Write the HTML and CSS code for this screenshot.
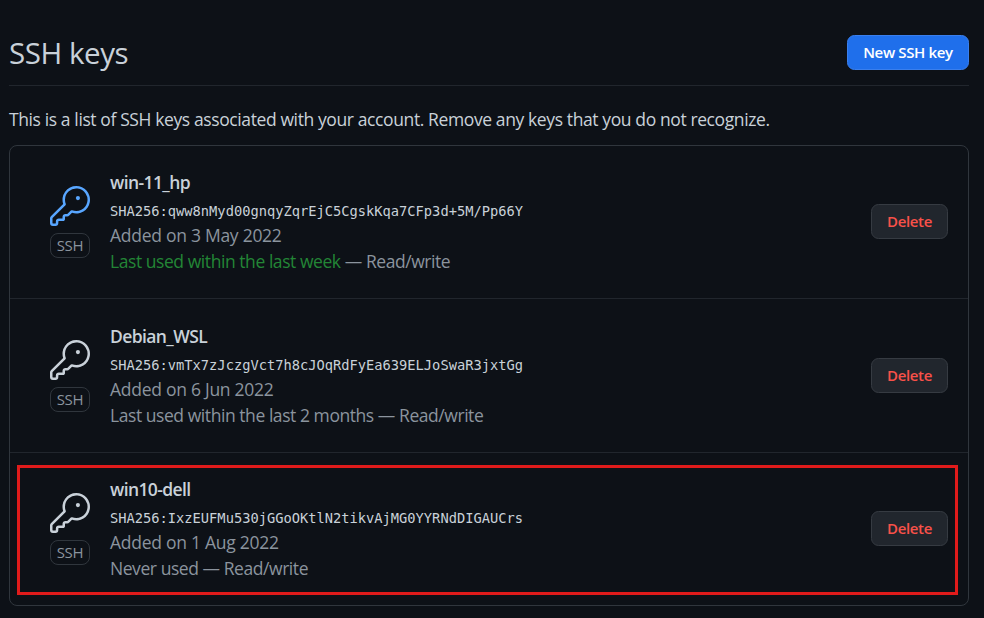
FILE: index.html
```html
<!DOCTYPE html>
<html lang="en">
<head>
<meta charset="utf-8">
<title>SSH keys</title>
<link rel="stylesheet" href="styles.css">
</head>
<body>
<svg width="0" height="0" class="sprite" aria-hidden="true">
  <symbol id="key" viewBox="0 0 24 24">
    <path d="M16.75 8.5a1.25 1.25 0 1 0 0-2.5 1.25 1.25 0 0 0 0 2.5Z"/>
    <path d="M15.75 0a8.25 8.25 0 1 1-2.541 16.101l-1.636 1.636a1.744 1.744 0 0 1-1.237.513H9.25a.25.25 0 0 0-.25.25v1.448a.876.876 0 0 1-.256.619l-.214.213a.75.75 0 0 1-.545.22H5.25a.25.25 0 0 0-.25.25v1A1.75 1.75 0 0 1 3.25 24h-1.5A1.75 1.75 0 0 1 0 22.25v-2.836c0-.464.185-.908.513-1.236l7.386-7.388A8.249 8.249 0 0 1 15.75 0ZM9 8.25a6.733 6.733 0 0 0 .463 2.462.75.75 0 0 1-.168.804l-7.722 7.721a.25.25 0 0 0-.073.177v2.836c0 .138.112.25.25.25h1.5a.25.25 0 0 0 .25-.25v-1c0-.966.784-1.75 1.75-1.75H7.5v-1c0-.966.784-1.75 1.75-1.75h1.086a.25.25 0 0 0 .177-.073l1.971-1.972a.75.75 0 0 1 .804-.168A6.75 6.75 0 1 0 9 8.25Z"/>
  </symbol>
</svg>
<main class="page">
  <header class="subhead">
    <h1 class="subhead-title">SSH keys</h1>
    <button class="btn btn-primary" type="button">New SSH key</button>
  </header>
  <p class="intro">This is a list of SSH keys associated with your account. Remove any keys that you do not recognize.</p>
  <ul class="keys">
    <li class="key">
      <div class="key-type">
        <svg class="key-icon key-icon-recent"><use href="#key"/></svg>
        <span class="label">SSH</span>
      </div>
      <div class="key-info">
        <strong class="key-name">win-11_hp</strong>
        <code class="key-hash">SHA256:qww8nMyd00gnqyZqrEjC5CgskKqa7CFp3d+5M/Pp66Y</code>
        <span class="key-meta key-date">Added on 3 May 2022</span>
        <span class="key-meta"><span class="recent">Last used within the last week</span> — Read/write</span>
      </div>
      <button class="btn btn-danger" type="button">Delete</button>
    </li>
    <li class="key">
      <div class="key-type">
        <svg class="key-icon"><use href="#key"/></svg>
        <span class="label">SSH</span>
      </div>
      <div class="key-info">
        <strong class="key-name">Debian_WSL</strong>
        <code class="key-hash">SHA256:vmTx7zJczgVct7h8cJOqRdFyEa639ELJoSwaR3jxtGg</code>
        <span class="key-meta key-date">Added on 6 Jun 2022</span>
        <span class="key-meta">Last used within the last 2 months — Read/write</span>
      </div>
      <button class="btn btn-danger" type="button">Delete</button>
    </li>
    <li class="key key-marked">
      <div class="key-type">
        <svg class="key-icon"><use href="#key"/></svg>
        <span class="label">SSH</span>
      </div>
      <div class="key-info">
        <strong class="key-name">win10-dell</strong>
        <code class="key-hash">SHA256:IxzEUFMu530jGGoOKtlN2tikvAjMG0YYRNdDIGAUCrs</code>
        <span class="key-meta key-date">Added on 1 Aug 2022</span>
        <span class="key-meta">Never used — Read/write</span>
      </div>
      <button class="btn btn-danger" type="button">Delete</button>
    </li>
  </ul>
</main>
</body>
</html>
```
FILE: styles.css
```css
* { box-sizing: border-box; }

body {
  margin: 0;
  background: #0d1117;
  color: #c9d1d9;
  font-family: "Open Sans", "Noto Sans", sans-serif;
  font-size: 17.5px;
  line-height: 26px;
}

.sprite { position: absolute; }

.page { padding: 35px 15px 0 9px; }

.subhead {
  display: flex;
  justify-content: space-between;
  align-items: flex-start;
  height: 51px;
  border-bottom: 1px solid #21262d;
}

.subhead-title {
  margin: 0;
  font-size: 29.5px;
  font-weight: 400;
  line-height: 35px;
  letter-spacing: -0.45px;
}

.btn {
  flex: none;
  height: 35px;
  padding: 0;
  border: 1px solid #363b42;
  border-radius: 7.5px;
  font-family: inherit;
  font-size: 15px;
  font-weight: 600;
  line-height: 33px;
  letter-spacing: -0.35px;
}

.btn-primary {
  width: 122px;
  background: #1f6feb;
  border-color: #3a7fed;
  color: #fff;
}

.btn-danger {
  width: 77px;
  margin-top: -1px;
  background: #21262d;
  color: #f85149;
}

.intro {
  margin: 20px 0 13px;
  letter-spacing: -0.39px;
  white-space: nowrap;
}

.keys {
  margin: 0;
  padding: 0;
  list-style: none;
  border: 1px solid #30363d;
  border-radius: 8px;
}

.key {
  position: relative;
  display: flex;
  align-items: center;
  height: 152px;
  padding: 0 20px 0 40px;
}

.key + .key {
  height: 154px;
  border-top: 1px solid #21262d;
}

.key + .key-marked { height: 153px; }

.key-type {
  display: flex;
  flex-direction: column;
  align-items: center;
  gap: 7px;
  width: 40px;
  margin-right: 20px;
}

.key-icon {
  width: 40px;
  height: 40px;
  fill: #c9d1d9;
}

.key-icon-recent { fill: #58a6ff; }

.label {
  width: 40px;
  height: 25px;
  border: 1px solid #30363d;
  border-radius: 8px;
  color: #8b949e;
  font-size: 15px;
  line-height: 23px;
  letter-spacing: -0.3px;
  text-align: center;
}

.key-info {
  display: flex;
  flex: 1;
  flex-direction: column;
  padding-bottom: 1px;
  white-space: nowrap;
}

.key-name {
  margin-bottom: 3px;
  font-weight: 600;
  letter-spacing: -0.6px;
}

.key-hash {
  margin-bottom: -2px;
  font-family: "DejaVu Sans Mono", monospace;
  font-size: 13.72px;
}

.key-meta {
  color: #8b949e;
  letter-spacing: -0.44px;
}

.key-date { letter-spacing: -0.27px; }

.recent { color: #238636; }

/* Frame drawn around the key to highlight it */
.key-marked::after {
  content: "";
  position: absolute;
  inset: 12px 10px 10px 7px;
  border: 3px solid #e01b1b;
  pointer-events: none;
}
```
